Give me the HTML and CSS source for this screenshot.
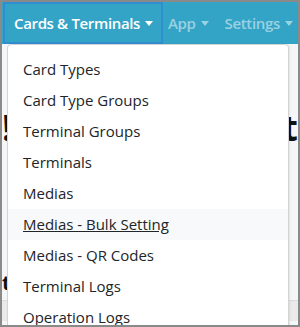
FILE: index.html
```html
<html>
    <head>
        <meta charset="UTF-8">
        <title>Cards &amp; Terminals</title>
        <link rel="stylesheet" href="styles.css">
    </head>
    <body>
        <div class="frame">
            <div class="navbar">
                <a class="nav-link active" href="#">Cards &amp; Terminals<span class="caret"></span></a>
                <a class="nav-link app" href="#">App<span class="caret"></span></a>
                <a class="nav-link settings" href="#">Settings<span class="caret"></span></a>
            </div>

            <div class="page">
                <div class="heading"><span>!</span><span>t</span></div>
                <div class="sub"><span>t</span></div>
                <div class="footer-bar"></div>
            </div>

            <div class="dropdown-menu">
                <a class="dropdown-item" href="#">Card Types</a>
                <a class="dropdown-item" href="#">Card Type Groups</a>
                <a class="dropdown-item" href="#">Terminal Groups</a>
                <a class="dropdown-item" href="#">Terminals</a>
                <a class="dropdown-item" href="#">Medias</a>
                <a class="dropdown-item hover" href="#">Medias - Bulk Setting</a>
                <a class="dropdown-item" href="#">Medias - QR Codes</a>
                <a class="dropdown-item" href="#">Terminal Logs</a>
                <a class="dropdown-item" href="#">Operation Logs</a>
            </div>
        </div>
    </body>
</html>
```
FILE: styles.css
```css
body{margin:0; font-family:"Open Sans","Noto Sans",sans-serif; background:#fff;}

.frame{position:relative; width:300px; height:327px; box-sizing:border-box; border:2px solid #8a8a8a; overflow:hidden; background:#fff;}

.navbar{display:flex; align-items:stretch; height:42px; background-color:#33a4c6;}
.nav-link{display:flex; align-items:center; text-decoration:none; font-size:15px; font-weight:600; letter-spacing:-0.35px; color:rgba(255,255,255,0.5); white-space:nowrap;}
.nav-link.active{color:#fff; box-sizing:border-box; width:160px; margin-left:1px; padding-left:9px; border:2px solid #2f8dd0;}
.nav-link.app{padding-left:5px;}
.nav-link.settings{padding-left:16px;}
.caret{display:inline-block; margin-left:5px; border-top:5px solid; border-left:4px solid transparent; border-right:4px solid transparent;}

.page{background:#f5f6f8; height:283px;}
.heading{display:flex; justify-content:space-between; padding:68px 0 0 0; font-size:36px; font-weight:700; line-height:32px; color:#111;}
.sub{padding-top:130px; font-size:20px; font-weight:700; line-height:18px; color:#111;}
.footer-bar{margin-top:8px; height:20px; background:#eaeaea; border-top:1px solid #dcdcdc;}

.dropdown-menu{position:absolute; top:42px; left:5px; width:282px; height:300px; box-sizing:border-box; padding-top:9px; background:#fff; border:1px solid #d4d4d4; border-radius:4px; box-shadow:1px 0 2px rgba(0,0,0,0.08);}
.dropdown-item{display:block; padding:4px 15px; line-height:23px; font-size:15px; color:#212529; text-decoration:none; white-space:nowrap;}
.dropdown-item.hover{background:#f8f9fa; text-decoration:underline;}
```
